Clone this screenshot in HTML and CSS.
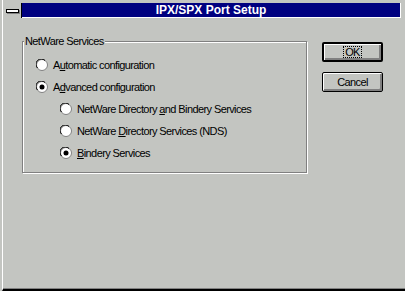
FILE: index.html
```html
<!DOCTYPE html>
<html>
<head>
<meta charset="utf-8">
<link rel="stylesheet" href="styles.css">
</head>
<body>
<div class="window">
  <div class="caption">
    <div class="sysmenu"><span class="sysbar"></span></div>
    <div class="title">IPX/SPX Port Setup</div>
  </div>
  <div class="client">
    <fieldset class="group">
      <legend class="group-label">NetWare Services</legend>
      <div class="options">
        <div class="opt">
          <svg class="radio" width="12" height="12" viewBox="0 0 12 12"><circle cx="6" cy="6" r="5.5" fill="#fff" stroke="#808080"/><path d="M1.5 9 A5 5 0 0 1 9 1.5" fill="none" stroke="#000"/></svg>
          <span>A<u>u</u>tomatic configuration</span>
        </div>
        <div class="opt">
          <svg class="radio" width="12" height="12" viewBox="0 0 12 12"><circle cx="6" cy="6" r="5.5" fill="#fff" stroke="#808080"/><path d="M1.5 9 A5 5 0 0 1 9 1.5" fill="none" stroke="#000"/><circle cx="6" cy="6" r="2.5" fill="#000"/></svg>
          <span>A<u>d</u>vanced configuration</span>
        </div>
        <div class="sub">
          <div class="opt">
            <svg class="radio" width="12" height="12" viewBox="0 0 12 12"><circle cx="6" cy="6" r="5.5" fill="#fff" stroke="#808080"/><path d="M1.5 9 A5 5 0 0 1 9 1.5" fill="none" stroke="#000"/></svg>
            <span>NetWare Directory <u>a</u>nd Bindery Services</span>
          </div>
          <div class="opt">
            <svg class="radio" width="12" height="12" viewBox="0 0 12 12"><circle cx="6" cy="6" r="5.5" fill="#fff" stroke="#808080"/><path d="M1.5 9 A5 5 0 0 1 9 1.5" fill="none" stroke="#000"/></svg>
            <span>NetWare <u>D</u>irectory Services (NDS)</span>
          </div>
          <div class="opt">
            <svg class="radio" width="12" height="12" viewBox="0 0 12 12"><circle cx="6" cy="6" r="5.5" fill="#fff" stroke="#808080"/><path d="M1.5 9 A5 5 0 0 1 9 1.5" fill="none" stroke="#000"/><circle cx="6" cy="6" r="2.5" fill="#000"/></svg>
            <span><u>B</u>indery Services</span>
          </div>
        </div>
      </div>
    </fieldset>
    <div class="buttons">
      <button class="btn default"><span class="focus">OK</span></button>
      <button class="btn">Cancel</button>
    </div>
  </div>
</div>
</body>
</html>
```
FILE: styles.css
```css
html, body {
  margin: 0;
  padding: 0;
  background: #c3c5c1;
}
body {
  width: 405px;
  height: 291px;
  overflow: hidden;
  font-family: "Liberation Sans", Arial, sans-serif;
  font-size: 11px;
  letter-spacing: -0.6px;
  color: #000;
}
.window {
  box-sizing: border-box;
  height: 291px;
  margin-left: 2px;
  border-left: 1px solid #fff;
  border-bottom: 2px solid #000;
  box-shadow: inset 0 -1px 0 #808080;
}
.caption {
  display: flex;
  padding-top: 3px;
  margin-right: 4px;
}
.sysmenu {
  box-sizing: border-box;
  width: 19px;
  height: 15px;
  display: flex;
  align-items: center;
  justify-content: center;
  border-right: 1px solid #000;
}
.sysbar {
  width: 11px;
  height: 2px;
  background: #fff;
  border: 1px solid #000;
  box-shadow: 1px 1px 0 #808080;
}
.title {
  flex: 1;
  height: 14px;
  background: #000080;
  border-right: 1px solid #fff;
  border-bottom: 1px solid #fff;
  color: #fff;
  font-weight: bold;
  font-size: 12px;
  letter-spacing: 0;
  line-height: 14px;
  text-align: center;
}
.client {
  display: flex;
  align-items: flex-start;
  padding-left: 19px;
}
.group {
  box-sizing: border-box;
  width: 285px;
  height: 138px;
  margin: 17px 0 0 0;
  padding: 0 0 0 1px;
  border: 1px solid #808080;
  box-shadow: inset 1px 1px 0 #fff, 1px 1px 0 #fff;
}
.group-label {
  padding: 0 1px;
  line-height: 13px;
  background: #c3c5c1;
}
.options {
  display: flex;
  flex-direction: column;
  padding: 6px 0 0 12px;
}
.sub {
  display: flex;
  flex-direction: column;
  padding-left: 24px;
}
.opt {
  display: flex;
  align-items: center;
  gap: 5px;
  height: 22px;
}
.radio {
  flex: none;
  display: block;
}
.buttons {
  display: flex;
  flex-direction: column;
  gap: 10px;
  margin: 24px 0 0 15px;
}
.btn {
  box-sizing: border-box;
  width: 61px;
  height: 20px;
  padding: 0;
  margin: 0;
  background: #c3c5c1;
  border: 1px solid #000;
  border-radius: 2px;
  box-shadow: inset 1px 1px 0 #fff, inset -2px -2px 0 #808080;
  font-family: "Liberation Sans", Arial, sans-serif;
  font-size: 11px;
  letter-spacing: -0.6px;
  color: #000;
  display: flex;
  align-items: center;
  justify-content: center;
}
.btn.default {
  border-width: 2px;
}
.focus {
  border: 1px dotted #000;
  padding: 0 1px;
  line-height: 10px;
}
```
